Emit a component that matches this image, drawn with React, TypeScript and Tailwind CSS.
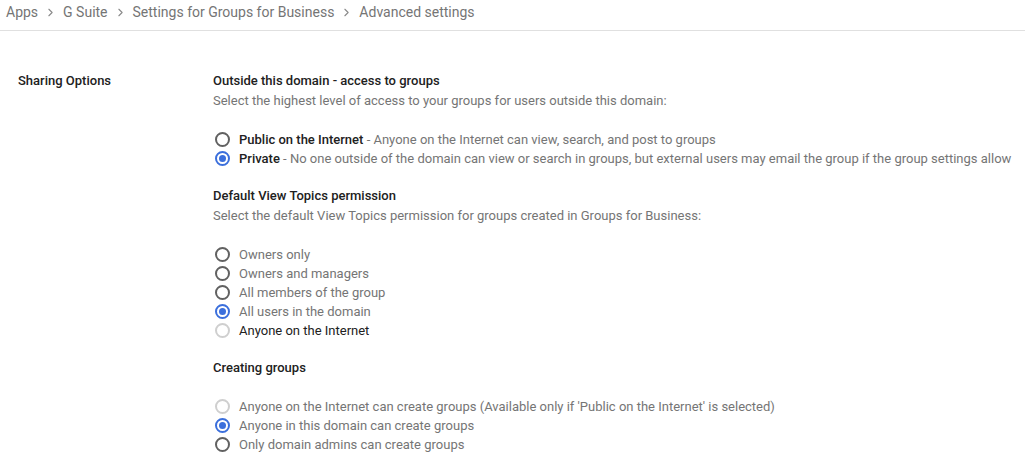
import { ChevronRight } from 'lucide-react';

type Option = {
  label: string;
  note?: string;
  checked?: boolean;
  disabled?: boolean;
  strong?: boolean;
  dark?: boolean;
};

type Section = {
  title: string;
  description?: string;
  options: Option[];
};

const sections: Section[] = [
  {
    title: 'Outside this domain - access to groups',
    description: 'Select the highest level of access to your groups for users outside this domain:',
    options: [
      { label: 'Public on the Internet', note: ' - Anyone on the Internet can view, search, and post to groups', strong: true },
      {
        label: 'Private',
        note: ' - No one outside of the domain can view or search in groups, but external users may email the group if the group settings allow',
        strong: true,
        checked: true,
      },
    ],
  },
  {
    title: 'Default View Topics permission',
    description: 'Select the default View Topics permission for groups created in Groups for Business:',
    options: [
      { label: 'Owners only' },
      { label: 'Owners and managers' },
      { label: 'All members of the group' },
      { label: 'All users in the domain', checked: true },
      { label: 'Anyone on the Internet', disabled: true, dark: true },
    ],
  },
  {
    title: 'Creating groups',
    options: [
      { label: "Anyone on the Internet can create groups (Available only if 'Public on the Internet' is selected)", disabled: true },
      { label: 'Anyone in this domain can create groups', checked: true },
      { label: 'Only domain admins can create groups' },
    ],
  },
];

function Radio({ checked, disabled }: { checked?: boolean; disabled?: boolean }) {
  const ring = checked ? 'border-[#3b6fdc]' : disabled ? 'border-[#cfcfcf]' : 'border-[#616161]';
  return (
    <span className={`w-[15px] h-[15px] rounded-full border-2 ${ring} flex items-center justify-center shrink-0`}>
      {checked && <span className="w-[7px] h-[7px] rounded-full bg-[#3b6fdc]" />}
    </span>
  );
}

export default function App() {
  const crumbs = ['Apps', 'G Suite', 'Settings for Groups for Business', 'Advanced settings'];

  return (
    <div className="w-[1025px] h-[465px] bg-white overflow-hidden font-['Roboto',sans-serif]">
      {/* breadcrumb bar */}
      <div className="h-[31px] border-b border-[#e0e0e0] flex items-start pl-[6px] pt-[2px] text-[14px] leading-[20px] text-[#757575]">
        {crumbs.map((c, i) => (
          <div key={c} className="flex items-center">
            {i > 0 && <ChevronRight size={13} strokeWidth={2} className="mx-[6px] text-[#8a8a8a]" />}
            <span>{c}</span>
          </div>
        ))}
      </div>

      <div className="flex pt-[40px] text-[13px]">
        <div className="w-[213px] pl-[18px] font-medium text-[#212121] leading-[20px]">Sharing Options</div>

        <div className="flex flex-col gap-[18px]">
          {sections.map((s) => (
            <div key={s.title}>
              <div className="font-medium text-[#212121] leading-[20px]">{s.title}</div>
              {s.description && <div className="text-[#757575] leading-[20px]">{s.description}</div>}
              <div className="mt-[19px] flex flex-col">
                {s.options.map((o) => (
                  <label key={o.label} className="flex items-center h-[19px] pl-[2px] gap-[9px]">
                    <Radio checked={o.checked} disabled={o.disabled} />
                    <span className={o.dark || o.strong ? 'text-[#212121]' : 'text-[#757575]'}>
                      <span className={o.strong ? 'font-medium' : ''}>{o.label}</span>
                      {o.note && <span className="text-[#757575]">{o.note}</span>}
                    </span>
                  </label>
                ))}
              </div>
            </div>
          ))}
        </div>
      </div>
    </div>
  );
}
